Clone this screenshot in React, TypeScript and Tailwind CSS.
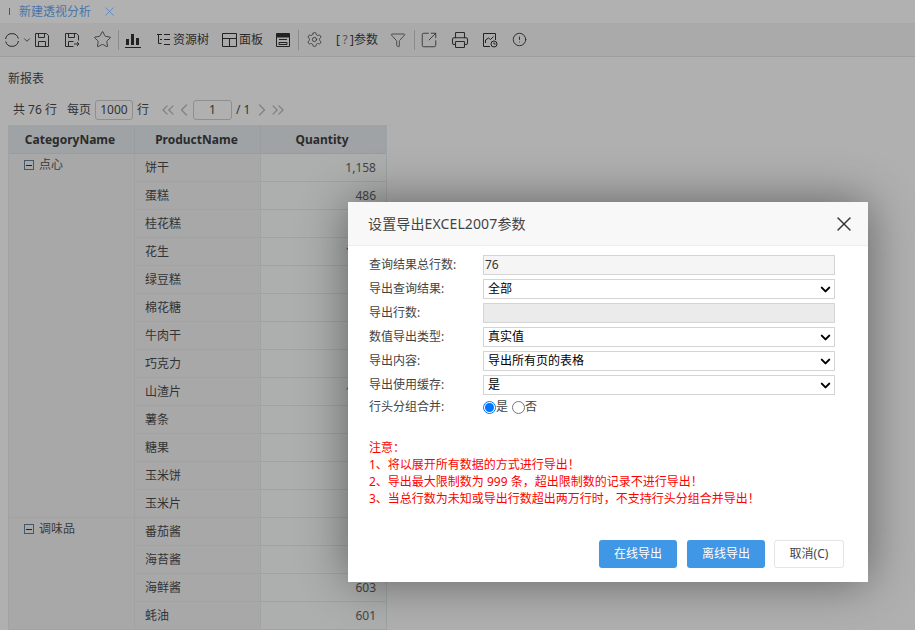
import { X, ChevronDown, ChevronLeft, ChevronRight, ChevronsLeft, ChevronsRight, Star, Settings, Filter, SquareArrowOutUpRight, Printer, CircleAlert } from 'lucide-react';

const cjk = '"Noto Sans","Noto Sans CJK SC",sans-serif';

const rows1 = [
  ['饼干', '1,158'],
  ['蛋糕', '486'],
  ['桂花糕', ''],
  ['花生', '1,000'],
  ['绿豆糕', ''],
  ['棉花糖', ''],
  ['牛肉干', ''],
  ['巧克力', ''],
  ['山渣片', '1,000'],
  ['薯条', ''],
  ['糖果', ''],
  ['玉米饼', ''],
  ['玉米片', ''],
];
const rows2 = [
  ['番茄酱', ''],
  ['海苔酱', ''],
  ['海鲜酱', '603'],
  ['蚝油', '601'],
];

const Group = ({ name, rows }: { name: string; rows: string[][] }) => (
  <div className="flex">
    <div className="w-[126px] shrink-0 border-r border-b border-[#9fa3a5] pl-[15px] pt-[1px]">
      <div className="flex items-center gap-[5px] h-[20px]">
        <span className="w-[10px] h-[10px] border border-[#44586a] flex items-center justify-center">
          <span className="w-[6px] h-px bg-[#222]" />
        </span>
        <span className="text-[12px] text-[#3c3c3c]">{name}</span>
      </div>
    </div>
    <div className="flex-1">
      {rows.map(([p, q]) => (
        <div key={p} className="flex h-[28px] border-b border-[#9fa3a5]">
          <div className="w-[126px] shrink-0 border-r border-[#9fa3a5] pl-[10px] flex items-center text-[12px] text-[#333]">{p}</div>
          <div className="flex-1 bg-[#adafae] pr-[10px] flex items-center justify-end text-[12px] text-[#444]">{q}</div>
        </div>
      ))}
    </div>
  </div>
);

const Field = ({ label, children, short }: { label: string; children: React.ReactNode; short?: boolean }) => (
  <div className={short ? 'flex items-center h-[20px]' : 'flex items-center h-[24px]'}>
    <div className="w-[114px] shrink-0 text-[12px] text-[#444]">{label}</div>
    {children}
  </div>
);

const Select = ({ value }: { value: string }) => (
  <div className="w-[352px] h-[20px] border border-[#d4d4d4] bg-white flex items-center justify-between pl-[4px] pr-[1px] text-[12px] text-black">
    <span>{value}</span>
    <ChevronDown size={15} strokeWidth={3.2} />
  </div>
);

export default function App() {
  return (
    <div className="relative w-[915px] h-[630px] overflow-hidden bg-[#b0b0b0]" style={{ fontFamily: cjk }}>
      {/* tab bar */}
      <div className="h-[23px] bg-[#b1b1b1] flex items-center pl-[9px] text-[12px]">
        <span className="w-px h-[7px] bg-[#555] mr-[9px]" />
        <span className="text-[#4a74a8]">新建透视分析</span>
        <X size={15} strokeWidth={1.4} className="ml-[11px] text-[#5a85bd]" />
      </div>

      {/* toolbar */}
      <div className="h-[34px] bg-[#aaaaaa] border-b border-[#9e9e9e] flex items-center pl-[5px] text-[12px] text-[#2a2a2a]">
        <svg width="14" height="14" viewBox="0 0 14 14" fill="none" stroke="#2a2a2a">
          <path d="M13.3 5.5A6.5 6.5 0 0 0 .6 6M.7 8.5A6.5 6.5 0 0 0 13.4 8" />
        </svg>
        <ChevronDown size={10} strokeWidth={2} className="ml-[3px]" />
        <svg width="14" height="14" viewBox="0 0 14 14" fill="none" stroke="#2a2a2a" className="ml-[3px]">
          <path d="M.5.5h11l2 2v11H.5zM3.5.5v4h6v-4M3.5 13.5v-5h7v5" />
        </svg>
        <svg width="14" height="14" viewBox="0 0 14 14" fill="none" stroke="#2a2a2a" className="ml-[16px]">
          <path d="M13.5 7.5v-5l-2-2H.5v13h8M3.5.5v4h6v-4M3.5 13.5v-5h5M9 11h5M12 9l2 2-2 2" />
        </svg>
        <Star size={19} strokeWidth={1} className="ml-[14px]" />
        <span className="w-px h-[20px] bg-[#8a8a8a] ml-[6px]" />
        <svg width="16" height="16" viewBox="0 0 16 16" className="ml-[6px]">
          <path d="M1 7h3v6H1zM6 2h3v11H6zM11 6h3v7h-3zM0 15h16v1H0z" fill="#222" />
        </svg>
        <svg width="13" height="12" viewBox="0 0 13 12" className="ml-[16px]" fill="none" stroke="#222">
          <path d="M0 .5h5M1.5 .5v9h3M7 .5h6M3 5.5h2M7 5.5h6M7 10.5h6" />
        </svg>
        <span className="ml-[3px]">资源树</span>
        <svg width="15" height="14" viewBox="0 0 15 14" className="ml-[13px]" fill="none" stroke="#222">
          <path d="M.5.5h14v13H.5zM.5 5.5h14M7.5 5.5v8" />
        </svg>
        <span className="ml-[2px]">面板</span>
        <svg width="14" height="14" viewBox="0 0 14 14" className="ml-[13px]" fill="none" stroke="#222">
          <path d="M.5.5h13v13H.5z" />
          <path d="M1 1h12v3H1z" fill="#222" />
          <path d="M3 6.5h8M3 9.5h8v2H3z" />
        </svg>
        <span className="w-px h-[20px] bg-[#8a8a8a] ml-[8px]" />
        <Settings size={17} strokeWidth={1.1} className="ml-[7px]" />
        <span className="ml-[13px] w-[18px] flex justify-between">
          <span>[</span>
          <span className="text-[#555]">?</span>
          <span>]</span>
        </span>
        <span>参数</span>
        <Filter size={16} strokeWidth={1.1} className="ml-[12px]" />
        <span className="w-px h-[20px] bg-[#8a8a8a] ml-[8px]" />
        <SquareArrowOutUpRight size={18} strokeWidth={1.1} className="ml-[5px]" />
        <Printer size={18} strokeWidth={1.4} className="ml-[13px]" />
        <svg width="16" height="16" viewBox="0 0 16 16" className="ml-[13px]" fill="none" stroke="#222">
          <path d="M8 14.5H1.5v-13h12V8M3.5 11V8l3-2 2 1.5 3-3" />
          <circle cx="12" cy="12" r="3" />
          <path d="M12 10.5V12h1.5" />
        </svg>
        <CircleAlert size={15} strokeWidth={1.5} className="ml-[14px]" />
      </div>

      {/* report */}
      <div className="pl-[8px] pt-[13px]">
        <div className="text-[12px] text-[#333] h-[18px]">新报表</div>
        <div className="flex items-center h-[20px] mt-[12px] pl-[5px] text-[12px] text-[#333]">
          <span>共 76 行</span>
          <span className="ml-[10px]">每页</span>
          <span className="ml-[4px] w-[38px] h-[20px] border border-[#8f8f8f] rounded-[3px] flex items-center justify-center">1000</span>
          <span className="ml-[4px]">行</span>
          <ChevronsLeft size={20} strokeWidth={1.5} className="ml-[9px] text-[#808080]" />
          <ChevronLeft size={20} strokeWidth={1.5} className="-ml-[4px] text-[#808080]" />
          <span className="-ml-[1px] w-[39px] h-[20px] border border-[#8f8f8f] rounded-[3px] flex items-center justify-center">1</span>
          <span className="ml-[4px]">/ 1</span>
          <ChevronRight size={20} strokeWidth={1.5} className="ml-[2px] text-[#808080]" />
          <ChevronsRight size={20} strokeWidth={1.5} className="-ml-[4px] text-[#808080]" />
        </div>
        <div className="mt-[5px] w-[379px] border-l border-r border-t border-[#9fa3a5] bg-[#a9a8a9]">
          <div className="flex h-[28px] bg-[#a0a3a5] border-b border-[#9a9c9e] text-[12px] font-bold text-[#2b2b2b]">
            <div className="w-[126px] flex items-center justify-center pr-[3px] border-r border-[#9a9c9e]">CategoryName</div>
            <div className="w-[126px] flex items-center justify-center pr-[2px] border-r border-[#9a9c9e]">ProductName</div>
            <div className="flex-1 flex items-center justify-center pr-[3px]">Quantity</div>
          </div>
          <Group name="点心" rows={rows1} />
          <Group name="调味品" rows={rows2} />
        </div>
      </div>

      {/* modal */}
      <div className="absolute left-[348px] top-[202px] w-[520px] h-[380px] bg-white shadow-[0_0_45px_rgba(0,0,0,0.45)] flex flex-col">
        <div className="h-[44px] shrink-0 bg-[#f8f8f8] border-b border-[#eeeeee] flex items-center justify-between pl-[20px] pr-[12px]">
          <span className="text-[14px] text-[#444] tracking-[0.13px]">设置导出EXCEL2007参数</span>
          <X size={24} strokeWidth={1.4} className="text-[#333]" />
        </div>
        <div className="pl-[21px] pt-[7px]">
          <Field label="查询结果总行数:">
            <div className="w-[352px] h-[20px] border border-[#d4d4d4] bg-[#f5f5f5] flex items-center pl-[1px] text-[12px] text-[#333]">76</div>
          </Field>
          <Field label="导出查询结果:"><Select value="全部" /></Field>
          <Field label="导出行数:">
            <div className="w-[352px] h-[20px] border border-[#d4d4d4] bg-[#ebebeb]" />
          </Field>
          <Field label="数值导出类型:"><Select value="真实值" /></Field>
          <Field label="导出内容:"><Select value="导出所有页的表格" /></Field>
          <Field label="导出使用缓存:"><Select value="是" /></Field>
          <Field label="行头分组合并:" short>
            <span className="w-[13px] h-[13px] rounded-full border border-[#0075ff] flex items-center justify-center">
              <span className="w-[9px] h-[9px] rounded-full bg-[#0075ff]" />
            </span>
            <span className="text-[12px] text-[#444]">是</span>
            <span className="ml-[4px] w-[13px] h-[13px] rounded-full border border-[#767676]" />
            <span className="text-[12px] text-[#444]">否</span>
          </Field>
        </div>
        <div className="pl-[21px] mt-[22px] text-[12px] leading-[17px] text-[#ff0000]">
          <div>注意：</div>
          <div>1、将以展开所有数据的方式进行导出！</div>
          <div>2、导出最大限制数为 999 条，超出限制数的记录不进行导出！</div>
          <div>3、当总行数为未知或导出行数超出两万行时，不支持行头分组合并导出！</div>
        </div>
        <div className="mt-auto flex justify-end pr-[24px] pb-[14px] text-[12px]">
          <div className="w-[78px] h-[28px] rounded-[3px] bg-[#3f97e6] text-white flex items-center justify-center">在线导出</div>
          <div className="ml-[10px] w-[78px] h-[28px] rounded-[3px] bg-[#3f97e6] text-white flex items-center justify-center">离线导出</div>
          <div className="ml-[9px] w-[70px] h-[28px] rounded-[3px] border border-[#e5e5e5] bg-white text-[#444] flex items-center justify-center">取消(C)</div>
        </div>
      </div>
    </div>
  );
}
